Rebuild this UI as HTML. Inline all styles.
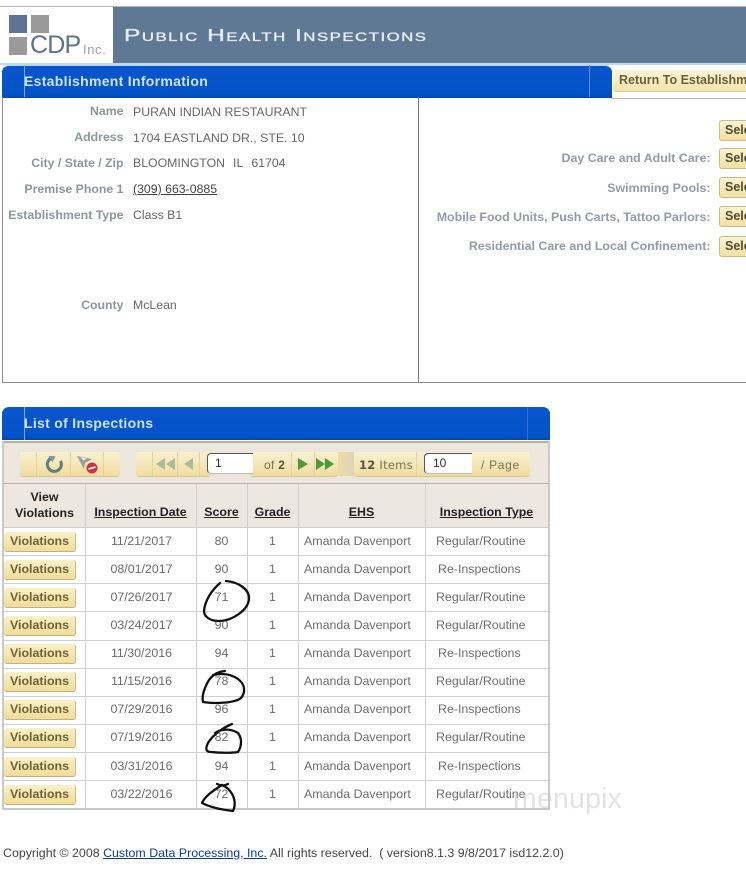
<!DOCTYPE html>
<html><head><meta charset="utf-8">
<style>
html,body{margin:0;padding:0;background:#fff}
#p{position:relative;width:746px;height:882px;overflow:hidden;background:#fff;font-family:"Liberation Sans",sans-serif;font-size:12.5px;color:#666}
#p div,#p span.a{position:absolute;white-space:nowrap}
.tab{background:linear-gradient(#0a55cc,#0353c8 85%,#0348ae);border-top:1px solid #b8d4ee}
.tt{color:#cfe4f6;font-weight:bold;font-size:14px;letter-spacing:.3px}
.lb{right:622.5px;font-weight:bold;color:#8d979b;text-align:right;font-size:12.3px}
.v{left:133px;color:#666;font-size:12.3px}
.rl{right:35.5px;font-weight:bold;color:#939ba3;font-size:12.4px}
.sel{left:719px;width:40px;height:19px;background:linear-gradient(#fbf4d2,#f3e0a0);border:1px solid #c9bb8d;border-radius:3px;font-weight:bold;color:#534a32;padding-left:5px;line-height:19px;box-sizing:content-box}
.b{left:4px;width:71px;height:19px;background:linear-gradient(#faf1c9,#f2dc98);border-radius:3px;border-right:1px solid #c9bb8d;border-bottom:1px solid #c0b184;font-weight:bold;color:#6e6238;text-align:center;line-height:19px;font-size:12.4px}
.c{color:#6c6c6c;line-height:16px;font-size:12.4px}
.h{font-weight:bold;color:#222;font-size:12.4px;text-align:center}
.u{text-decoration:underline}
.hl{left:3px;width:546px;height:1px;background:#cfcfcf}
.vl{width:1px;background:#cfcfcf;top:527px;height:282px}
.tb{background:linear-gradient(#f9f1d0,#f0dc9f);border-bottom:1px solid #d4c79c;border-radius:3px;height:24px;top:452px}
.sp{width:1px;height:24px;top:452px;background:#e0d2a2}
.inp{background:#fff;border:1px solid #555;border-right:0;border-bottom-color:#bbb;border-radius:4px 0 0 4px;height:21px;top:453px;color:#333;line-height:18px;padding-left:7px;box-sizing:border-box;font-size:12px}
</style></head><body>
<div id="p">
<!-- header -->
<div style="left:0;top:6px;width:746px;height:1px;background:#b5b5b5"></div>
<div style="left:113px;top:7px;width:633px;height:56px;background:#5f7893"></div>
<div style="left:0;top:63px;width:746px;height:2px;background:#bcd8ee"></div>
<div style="left:9px;top:15px;width:18px;height:18px;background:#5d7592"></div>
<div style="left:31px;top:15px;width:18px;height:18px;background:#9a9a9a"></div>
<div style="left:9px;top:37px;width:18px;height:18px;background:#9a9a9a"></div>
<div style="left:30px;top:31px;font-size:25px;color:#5f7287;letter-spacing:-.8px;line-height:28px">CDP</div>
<div style="left:83px;top:43px;font-size:13px;color:#9a9ea4;letter-spacing:.6px;line-height:14px">Inc.</div>
<div style="left:124px;top:25px;color:#e6edf4;font-size:17.5px;line-height:20px;letter-spacing:1.07px;font-variant:small-caps;transform:scaleX(1.4);transform-origin:0 50%;-webkit-text-stroke:.35px #e6edf4">Public Health Inspections</div>
<!-- Est tab -->
<div class="tab" style="left:2px;top:65px;width:610px;height:32px;border-radius:7px 7px 0 0"></div>
<div style="left:24px;top:65px;width:1px;height:32px;background:#7ea8e0"></div>
<div style="left:589px;top:65px;width:1px;height:32px;background:#5c90dc"></div>
<div class="tt" style="left:24px;top:73px;line-height:17px">Establishment Information</div>
<div style="left:613px;top:70px;width:133px;height:21px;background:linear-gradient(#fbf5d8,#f4e4ad);border-bottom:1px solid #d8c996;border-radius:3px 0 0 3px"></div>
<div style="left:619px;top:72px;font-weight:bold;color:#6b5f3b;line-height:16px">Return To Establishm</div>
<div style="left:612px;top:98px;width:134px;height:1px;background:#b7b7b7"></div>
<!-- boxes -->
<div style="left:2px;top:97px;width:1px;height:285px;background:#8e8e8e"></div>
<div style="left:418px;top:97px;width:1px;height:285px;background:#777"></div>
<div style="left:2px;top:382px;width:744px;height:1px;background:#8c8c8c"></div>
<div class="lb" style="top:104px">Name</div><div class="v" style="top:105px">PURAN INDIAN RESTAURANT</div>
<div class="lb" style="top:130px">Address</div><div class="v" style="top:131px">1704 EASTLAND DR., STE. 10</div>
<div class="lb" style="top:156px">City / State / Zip</div><div class="v" style="top:156px;word-spacing:.6px">BLOOMINGTON&nbsp;&nbsp;IL&nbsp;&nbsp;61704</div>
<div class="lb" style="top:182px">Premise Phone 1</div><div class="v" style="top:182px;color:#444;text-decoration:underline">(309) 663-0885</div>
<div class="lb" style="top:208px">Establishment Type</div><div class="v" style="top:208px">Class B1</div>
<div class="lb" style="top:298px">County</div><div class="v" style="top:298px">McLean</div>
<div class="sel" style="top:120px">Sele</div>
<div class="rl" style="top:151px">Day Care and Adult Care:</div><div class="sel" style="top:148px">Sele</div>
<div class="rl" style="top:181px">Swimming Pools:</div><div class="sel" style="top:177px">Sele</div>
<div class="rl" style="top:210px">Mobile Food Units, Push Carts, Tattoo Parlors:</div><div class="sel" style="top:206px">Sele</div>
<div class="rl" style="top:239px">Residential Care and Local Confinement:</div><div class="sel" style="top:236px">Sele</div>
<!-- list tab -->
<div class="tab" style="left:2px;top:407px;width:548px;height:33px;border-radius:7px 7px 0 0;border-top:0"></div>
<div style="left:24px;top:407px;width:1px;height:33px;background:#7ea8e0"></div>
<div style="left:527px;top:407px;width:1px;height:33px;background:#2f70d4"></div>
<div class="tt" style="left:24px;top:415px;line-height:17px">List of Inspections</div>
<!-- toolbar -->
<div style="left:3px;top:441px;width:546px;height:43px;background:#ece6dc;border-top:2px solid #b4b0a8;box-sizing:border-box"></div>
<div style="left:2px;top:441px;width:2px;height:369px;background:#c9c9c9"></div>
<div style="left:548px;top:441px;width:2px;height:369px;background:#c9c9c9"></div>
<div style="left:3px;top:483px;width:546px;height:1px;background:#b4b4b0"></div>
<div class="tb" style="left:20px;width:100px"></div>
<div class="sp" style="left:36px"></div><div class="sp" style="left:70px"></div><div class="sp" style="left:103px"></div>
<svg style="position:absolute;left:44px;top:455px" width="20" height="18" viewBox="0 0 20 18"><path d="M6.5 3.5A7 7 0 1 0 16.5 6" fill="none" stroke="#5d8078" stroke-width="3"/><path d="M4.5 1l7 .3-3 6z" fill="#7b9aa0"/></svg>
<svg style="position:absolute;left:76px;top:454px" width="24" height="20" viewBox="0 0 24 20"><path d="M1 2l15 3-7 4-1 6z" fill="#9a9d96"/><path d="M4 3l7 1.5-3.5 2z" fill="#ecece4"/><circle cx="16" cy="14" r="5.5" fill="#c23a48"/><path d="M12.5 15l7-2" stroke="#fff" stroke-width="1.6"/></svg>
<div class="tb" style="left:136px;width:75px"></div>
<div class="sp" style="left:152px"></div><div class="sp" style="left:177px"></div><div class="sp" style="left:199px"></div>
<svg style="position:absolute;left:155px;top:457px" width="42" height="14" viewBox="0 0 42 14"><path d="M10 1v12L1 7zM20 1v12L11 7zM38 1v12L29 7z" fill="#a9bd9e"/></svg>
<div class="tb" style="left:250px;width:88px"></div>
<div class="tb" style="left:354px;width:176px"></div>
<div style="left:338px;top:452px;width:16px;height:24px;background:linear-gradient(90deg,#ecdca8,#ddd4b4)"></div>
<div class="inp" style="left:207px;width:46px">1</div>
<div style="left:264px;top:458px;color:#77705a;font-size:12px;letter-spacing:.3px">of <b style="color:#5a5340">2</b></div>
<div class="sp" style="left:291px"></div><div class="sp" style="left:314px"></div>
<svg style="position:absolute;left:296px;top:457px" width="42" height="14" viewBox="0 0 42 14"><path d="M2 1v12l10-6zM20 1v12l9-6zM29 1v12l9-6z" fill="#4f9a38"/></svg>
<div style="left:359px;top:458px;color:#77705a;font-family:'DejaVu Sans',sans-serif;font-size:11.5px;letter-spacing:.25px"><b style="color:#5a5340">12</b> Items</div>
<div class="sp" style="left:416px"></div>
<div class="inp" style="left:424px;width:48px;padding-left:8px">10</div>
<div style="left:481px;top:458px;color:#77705a;font-size:12px;letter-spacing:.7px">/ Page</div>
<!-- table head -->
<div style="left:4px;top:484px;width:544px;height:43px;background:#ede8df"></div>
<div class="h" style="left:4px;top:489px;width:81px;line-height:16px">View<br>Violations</div>
<div class="h u" style="left:85px;top:505px;width:111px">Inspection Date</div>
<div class="h u" style="left:196px;top:505px;width:51px">Score</div>
<div class="h u" style="left:247px;top:505px;width:51px">Grade</div>
<div class="h u" style="left:298px;top:505px;width:127px">EHS</div>
<div class="h u" style="left:425px;top:505px;width:123px">Inspection Type</div>
<div class="vl" style="left:85px;top:484px;height:325px"></div><div class="vl" style="left:196px;top:484px;height:325px"></div><div class="vl" style="left:247px;top:484px;height:325px"></div><div class="vl" style="left:298px;top:484px;height:325px"></div><div class="vl" style="left:425px;top:484px;height:325px"></div>
<div class="hl" style="top:527px"></div><div class="hl" style="top:555px"></div><div class="hl" style="top:583px"></div><div class="hl" style="top:611px"></div><div class="hl" style="top:640px"></div><div class="hl" style="top:668px"></div><div class="hl" style="top:696px"></div><div class="hl" style="top:724px"></div><div class="hl" style="top:752px"></div><div class="hl" style="top:780px"></div>
<div style="left:2px;top:808px;width:548px;height:2px;background:#c9c9c9"></div>
<!-- rows -->
<div class="b" style="top:532px">Violations</div><div class="c" style="left:86px;width:111px;text-align:center;top:533px">11/21/2017</div><div class="c" style="left:196px;width:51px;text-align:center;top:533px">80</div><div class="c" style="left:247px;width:51px;text-align:center;top:533px">1</div><div class="c" style="left:304px;top:533px">Amanda Davenport</div><div class="c" style="left:436px;top:533px">Regular/Routine</div>
<div class="b" style="top:560px">Violations</div><div class="c" style="left:86px;width:111px;text-align:center;top:561px">08/01/2017</div><div class="c" style="left:196px;width:51px;text-align:center;top:561px">90</div><div class="c" style="left:247px;width:51px;text-align:center;top:561px">1</div><div class="c" style="left:304px;top:561px">Amanda Davenport</div><div class="c" style="left:438px;top:561px">Re-Inspections</div>
<div class="b" style="top:588px">Violations</div><div class="c" style="left:86px;width:111px;text-align:center;top:589px">07/26/2017</div><div class="c" style="left:196px;width:51px;text-align:center;top:589px">71</div><div class="c" style="left:247px;width:51px;text-align:center;top:589px">1</div><div class="c" style="left:304px;top:589px">Amanda Davenport</div><div class="c" style="left:436px;top:589px">Regular/Routine</div>
<div class="b" style="top:616px">Violations</div><div class="c" style="left:86px;width:111px;text-align:center;top:617px">03/24/2017</div><div class="c" style="left:196px;width:51px;text-align:center;top:617px">90</div><div class="c" style="left:247px;width:51px;text-align:center;top:617px">1</div><div class="c" style="left:304px;top:617px">Amanda Davenport</div><div class="c" style="left:436px;top:617px">Regular/Routine</div>
<div class="b" style="top:644px">Violations</div><div class="c" style="left:86px;width:111px;text-align:center;top:645px">11/30/2016</div><div class="c" style="left:196px;width:51px;text-align:center;top:645px">94</div><div class="c" style="left:247px;width:51px;text-align:center;top:645px">1</div><div class="c" style="left:304px;top:645px">Amanda Davenport</div><div class="c" style="left:438px;top:645px">Re-Inspections</div>
<div class="b" style="top:672px">Violations</div><div class="c" style="left:86px;width:111px;text-align:center;top:673px">11/15/2016</div><div class="c" style="left:196px;width:51px;text-align:center;top:673px">78</div><div class="c" style="left:247px;width:51px;text-align:center;top:673px">1</div><div class="c" style="left:304px;top:673px">Amanda Davenport</div><div class="c" style="left:436px;top:673px">Regular/Routine</div>
<div class="b" style="top:700px">Violations</div><div class="c" style="left:86px;width:111px;text-align:center;top:701px">07/29/2016</div><div class="c" style="left:196px;width:51px;text-align:center;top:701px">96</div><div class="c" style="left:247px;width:51px;text-align:center;top:701px">1</div><div class="c" style="left:304px;top:701px">Amanda Davenport</div><div class="c" style="left:438px;top:701px">Re-Inspections</div>
<div class="b" style="top:728px">Violations</div><div class="c" style="left:86px;width:111px;text-align:center;top:729px">07/19/2016</div><div class="c" style="left:196px;width:51px;text-align:center;top:729px">82</div><div class="c" style="left:247px;width:51px;text-align:center;top:729px">1</div><div class="c" style="left:304px;top:729px">Amanda Davenport</div><div class="c" style="left:436px;top:729px">Regular/Routine</div>
<div class="b" style="top:757px">Violations</div><div class="c" style="left:86px;width:111px;text-align:center;top:758px">03/31/2016</div><div class="c" style="left:196px;width:51px;text-align:center;top:758px">94</div><div class="c" style="left:247px;width:51px;text-align:center;top:758px">1</div><div class="c" style="left:304px;top:758px">Amanda Davenport</div><div class="c" style="left:438px;top:758px">Re-Inspections</div>
<div class="b" style="top:785px">Violations</div><div class="c" style="left:86px;width:111px;text-align:center;top:786px">03/22/2016</div><div class="c" style="left:196px;width:51px;text-align:center;top:786px">72</div><div class="c" style="left:247px;width:51px;text-align:center;top:786px">1</div><div class="c" style="left:304px;top:786px">Amanda Davenport</div><div class="c" style="left:436px;top:786px">Regular/Routine</div>
<!-- circles -->
<svg style="position:absolute;left:0;top:0" width="746" height="882" viewBox="0 0 746 882" fill="none" stroke="#111" stroke-width="2.3" stroke-linecap="round" stroke-linejoin="round">
<path d="M226 581C238 582 249 589 249 598C249 610 232 621 219 621C209 621 204 616 204 611C205 600 212 590 220 583"/>
<path d="M225 671C213 672 208 680 205 688C203 693 202 698 203 702C215 704 235 703 241 698C246 692 245 684 238 679C231 674 222 673 213 675"/>
<path d="M232 724C222 728 212 736 208 743C205 749 206 752 211 752C220 753 232 753 238 752C242 746 242 738 238 733C232 729 222 728 215 733"/>
<path d="M217 784C221 786 224 786 228 784M222 785C214 790 205 796 202 803C212 808 224 810 233 811C236 805 235 797 230 791C227 787 223 785 220 785"/>
</svg>
<!-- watermark -->
<div style="left:513px;top:783px;font-size:28.5px;line-height:32px;color:rgba(200,200,200,.5);letter-spacing:.2px">menupix</div>
<!-- footer -->
<div style="left:3px;top:846px;color:#444;font-size:12.4px;line-height:15px">Copyright © 2008 <span style="color:#0b3a9c;text-decoration:underline">Custom Data Processing, Inc.</span> All rights reserved.&nbsp; ( version8.1.3 9/8/2017 isd12.2.0)</div>
</div>
</body></html>
